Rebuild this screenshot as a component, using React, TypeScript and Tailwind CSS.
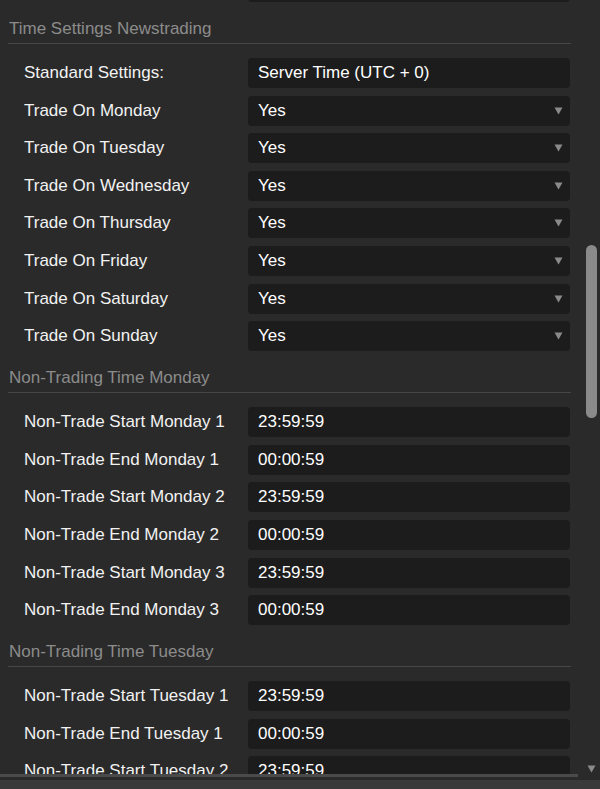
import React from 'react';

type Row = { label: string; value: string; select?: boolean };

const sections: { title: string; rows: Row[] }[] = [
    {
        title: 'Time Settings Newstrading',
        rows: [
            { label: 'Standard Settings:', value: 'Server Time (UTC + 0)' },
            { label: 'Trade On Monday', value: 'Yes', select: true },
            { label: 'Trade On Tuesday', value: 'Yes', select: true },
            { label: 'Trade On Wednesday', value: 'Yes', select: true },
            { label: 'Trade On Thursday', value: 'Yes', select: true },
            { label: 'Trade On Friday', value: 'Yes', select: true },
            { label: 'Trade On Saturday', value: 'Yes', select: true },
            { label: 'Trade On Sunday', value: 'Yes', select: true },
        ],
    },
    {
        title: 'Non-Trading Time Monday',
        rows: [
            { label: 'Non-Trade Start Monday 1', value: '23:59:59' },
            { label: 'Non-Trade End Monday 1', value: '00:00:59' },
            { label: 'Non-Trade Start Monday 2', value: '23:59:59' },
            { label: 'Non-Trade End Monday 2', value: '00:00:59' },
            { label: 'Non-Trade Start Monday 3', value: '23:59:59' },
            { label: 'Non-Trade End Monday 3', value: '00:00:59' },
        ],
    },
    {
        title: 'Non-Trading Time Tuesday',
        rows: [
            { label: 'Non-Trade Start Tuesday 1', value: '23:59:59' },
            { label: 'Non-Trade End Tuesday 1', value: '00:00:59' },
            { label: 'Non-Trade Start Tuesday 2', value: '23:59:59' },
            { label: 'Non-Trade End Tuesday 2', value: '00:00:59' },
        ],
    },
];

function Caret() {
    return (
        <svg width="9" height="8" viewBox="0 0 9 8" className="shrink-0">
            <path d="M0.5 0.5 H8.5 L4.5 7.5 Z" fill="#8a8a8a" />
        </svg>
    );
}

function SettingRow({ label, value, select }: Row) {
    return (
        <div className="flex items-center h-[30px] pr-[1px]">
            <div className="w-[240px] pl-4 text-[#f2f2f2] whitespace-nowrap">{label}</div>
            <div className="flex-1 h-full rounded-[4px] bg-[#1c1c1c] flex items-center justify-between pl-[10px] pr-[7px]">
                <span className="text-white whitespace-nowrap">{value}</span>
                {select && <Caret />}
            </div>
        </div>
    );
}

export default function App() {
    return (
        <div className="w-[600px] h-[789px] bg-[#2a2a2a] flex flex-col overflow-hidden font-['Liberation_Sans',Arial,sans-serif] text-[17px] leading-[20px]">
            <div className="flex h-[774px] shrink-0">
                {/* settings list */}
                <div className="w-[576px] overflow-hidden pl-2 pr-[5px]">
                    <div className="-mt-[28px] h-[30px] ml-[240px] mr-[1px] rounded-[4px] bg-[#1c1c1c]" />
                    {sections.map((s) => (
                        <div key={s.title}>
                            <div className="pt-[17px] pb-[4px] pl-[1px] border-b border-[#464646] text-[#8c8c8c] whitespace-nowrap">
                                {s.title}
                            </div>
                            <div className="mt-[14px] flex flex-col gap-[7.6px]">
                                {s.rows.map((r) => (
                                    <SettingRow key={r.label} {...r} />
                                ))}
                            </div>
                        </div>
                    ))}
                </div>

                {/* vertical scrollbar */}
                <div className="flex-1 flex flex-col items-center pl-[6px]">
                    <div className="mt-[245px] h-[173px] w-[11px] rounded-full bg-[#8a8a8a]" />
                    <div className="flex-1" />
                    <div className="mb-[1px]">
                        <Caret />
                    </div>
                </div>
            </div>
            <div className="h-[3px] w-[578px] bg-[#4a4a4a] shrink-0" />
            <div className="h-[3px] shrink-0" />
            <div className="flex-1 bg-[#3a3a3a]" />
        </div>
    );
}
